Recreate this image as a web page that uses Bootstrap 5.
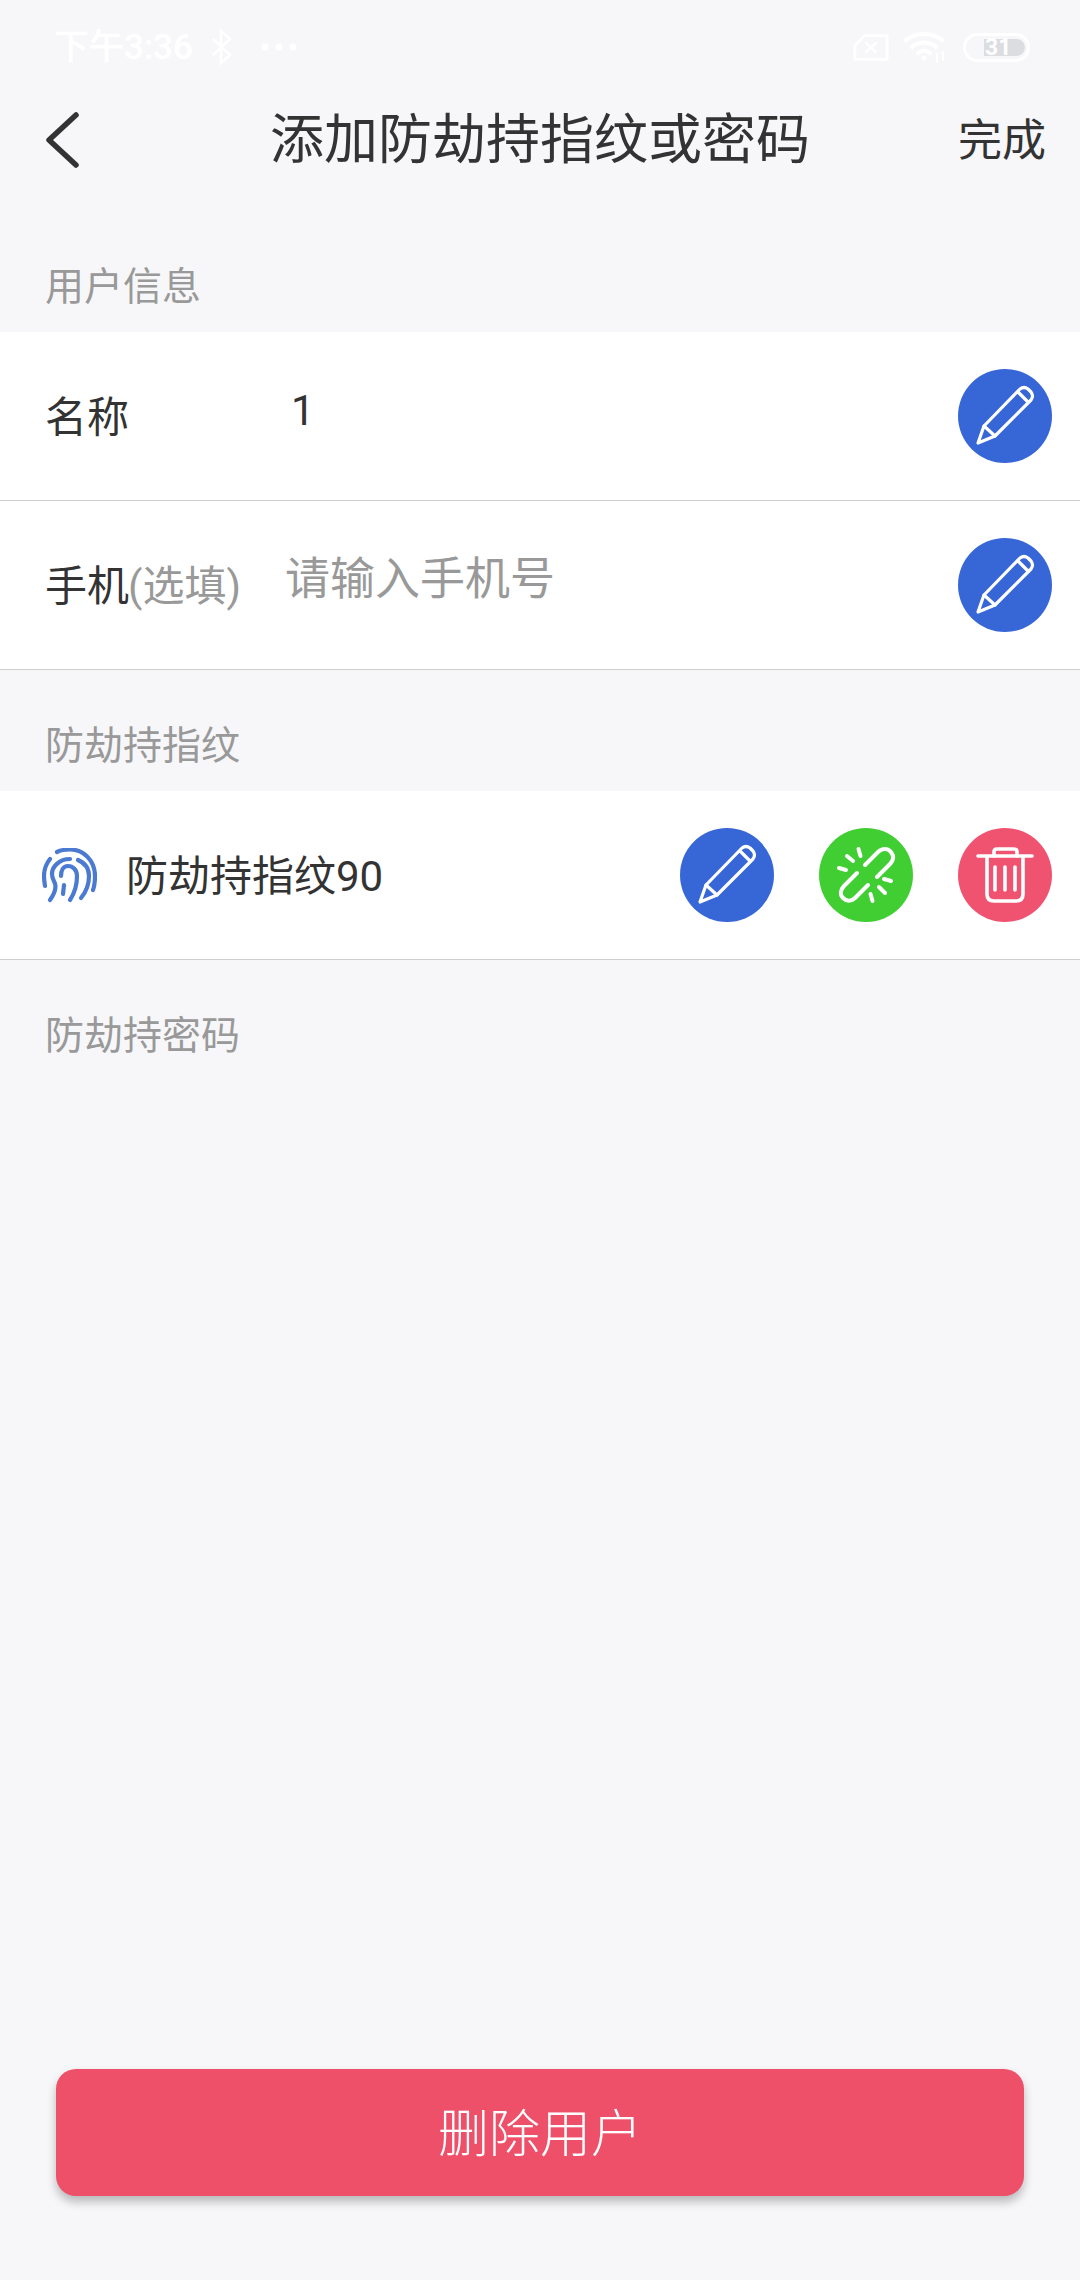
<!DOCTYPE html>
<html lang="zh-CN">
<head>
<meta charset="utf-8">
<title>添加防劫持指纹或密码</title>
<link rel="stylesheet" href="https://cdn.jsdelivr.net/npm/bootstrap@5.3.0/dist/css/bootstrap.min.css">
<style>
html, body { margin: 0; background: #f7f7fa; }
body { font-family: Roboto, "Noto Sans CJK SC", sans-serif; color: #333; font-weight: 400; }
.screen { width: 1080px; height: 2280px; }
.status-bar { height: 92px; padding: 2px 50px 0 54px; color: #fff; }
.status-time { font-size: 35px; font-weight: 500; line-height: 1; }
.bt-icon { margin-left: 18px; }
.dots-icon { margin-left: 28px; }
.wifi-icon { margin-left: 14px; }
.batt { width: 67px; height: 29px; border: 3px solid #fff; border-radius: 15px; padding-right: 2px; }
.batt-fill { width: 41px; height: 17px; background: #dcdde1; border-radius: 0 9px 9px 0; font-size: 23px; font-weight: 700; line-height: 17px; color: #fff; padding-left: 1px; }
.top-bar { height: 96px; }
.top-side { width: 125px; flex: none; white-space: nowrap; }
.top-title { font-size: 54px; line-height: 1; margin-top: 2px; }
.top-done { font-size: 44px; line-height: 1; text-align: right; padding-right: 34px; margin-top: 2px; }
.sec-label { font-size: 39px; line-height: 90px; height: 90px; padding-left: 45px; color: #999; }
.sec-first { margin-top: 54px; }
.sec-gap { margin-top: 31px; }
.info-row { height: 169px; background: #fff; border-bottom: 1px solid #cfcfcf; padding-right: 28px; }
.row-key { width: 285px; flex: none; padding-left: 45px; font-size: 42px; line-height: 1; margin-top: 4px; white-space: nowrap; }
.row-key small { font-size: 42px; color: #999; margin-left: -1px; }
.row-val { font-size: 42px; line-height: 1; margin-bottom: 10px; margin-left: 6px; }
.row-hint { font-size: 45px; line-height: 1; color: #999; margin-bottom: 12px; }
.fp-icon { margin-left: 42px; margin-right: 29px; flex: none; }
.fp-name { font-size: 42px; line-height: 1; margin-top: 3px; }
.circ { width: 94px; height: 94px; flex: none; display: block; }
.circ-gap { gap: 45px; }
.del-btn { width: 968px; height: 127px; margin: auto 0 84px 56px; padding-top: 10px; background: #ef5069; border: 0; border-radius: 20px; color: #fff; font-size: 51px; font-weight: 300; line-height: 1; box-shadow: 0 6px 10px rgba(0,0,0,.25); }
</style>
</head>
<body>
<div class="screen d-flex flex-column">
  <div class="status-bar d-flex align-items-center">
    <span class="status-time">下午3:36</span>
    <svg class="bt-icon" width="22" height="36" viewBox="0 0 22 36" fill="none" stroke="#fff" stroke-width="2.5"><path d="M2 10 L19 26 L10 34 V2 L19 10 L2 26"/></svg>
    <svg class="dots-icon" width="36" height="8" viewBox="0 0 36 8" fill="#fff"><circle cx="4" cy="4" r="3.5"/><circle cx="18" cy="4" r="3.5"/><circle cx="32" cy="4" r="3.5"/></svg>
    <svg class="ms-auto" width="36" height="29" viewBox="0 0 38 29" fill="none" stroke="#fff" stroke-width="3" stroke-linejoin="round"><path d="M2 12 L12 2 H36 V27 H2 Z"/><path d="M13 9 L25 20 M25 9 L13 20" stroke-width="2.5"/></svg>
    <svg class="wifi-icon" width="44" height="32" viewBox="0 0 44 32" fill="none" stroke="#fff" stroke-width="4" stroke-linecap="round"><path d="M3 9 C14 1 28 1 39 9"/><path d="M9 16 C16 10 26 10 33 16"/><path d="M15 22 C19 19 23 19 27 22"/><circle cx="21" cy="27" r="2.5" fill="#fff" stroke="none"/><path d="M34 23 V31 M40 21 V29" stroke-width="2"/></svg>
    <div class="batt ms-3 d-flex justify-content-end align-items-center">
      <div class="batt-fill">31</div>
    </div>
  </div>

  <div class="top-bar d-flex align-items-center">
    <div class="top-side">
      <svg class="d-block" width="120" height="60" viewBox="0 30 120 60" fill="none" stroke="#333" stroke-width="5.5" stroke-linecap="round" stroke-linejoin="round"><path d="M76 35 L49 60 L76 85"/></svg>
    </div>
    <div class="top-title flex-grow-1 text-center">添加防劫持指纹或密码</div>
    <div class="top-side top-done">完成</div>
  </div>

  <div class="sec-label sec-first">用户信息</div>
  <div class="info-row d-flex align-items-center">
    <div class="row-key">名称</div>
    <div class="row-val flex-grow-1">1</div>
    <svg class="circ" viewBox="0 0 94 94"><circle cx="47" cy="47" r="47" fill="#3766d6"/><g fill="none" stroke="#fff" stroke-width="3.2" stroke-linejoin="round" stroke-linecap="round"><path d="M20 74 L26 57 L62 20 Q66 17 70 20 L73 23 Q76 27 73 31 L37 67 Z"/><path d="M26 57 L37 67"/><path d="M60 23 L70 33"/></g></svg>
  </div>
  <div class="info-row d-flex align-items-center">
    <div class="row-key">手机<small>(选填)</small></div>
    <div class="row-hint flex-grow-1">请输入手机号</div>
    <svg class="circ" viewBox="0 0 94 94"><circle cx="47" cy="47" r="47" fill="#3766d6"/><g fill="none" stroke="#fff" stroke-width="3.2" stroke-linejoin="round" stroke-linecap="round"><path d="M20 74 L26 57 L62 20 Q66 17 70 20 L73 23 Q76 27 73 31 L37 67 Z"/><path d="M26 57 L37 67"/><path d="M60 23 L70 33"/></g></svg>
  </div>

  <div class="sec-label sec-gap">防劫持指纹</div>
  <div class="info-row d-flex align-items-center">
    <svg class="fp-icon" width="55" height="55" viewBox="0 0 55 55" fill="none" stroke="#4a7ad2" stroke-width="4.2" stroke-linecap="round">
      <path d="M15 4 C19 2 24 1.500 28 1.500 C42 1.500 53 13 53 28 C53 33 52.500 38 51 42"/>
      <path d="M8 11 C4 16 2 22 2 28 C2 32 2.500 35 3 38"/>
      <path d="M8 52 C11 48 13.500 44 13.500 38 C13.500 34 10 32 10 26 C10 19 17 11 28 11"/>
      <path d="M36 12 C43 15 47 21 47 28 C47 36 44 44 39 50"/>
      <path d="M28 52 C32 46 35 38 35 28 C35 22 31 18 26 18 C21 18 19 23 19 28"/>
      <path d="M22 37 L21 46"/>
    </svg>
    <div class="fp-name flex-grow-1">防劫持指纹90</div>
    <div class="d-flex circ-gap">
      <svg class="circ" viewBox="0 0 94 94"><circle cx="47" cy="47" r="47" fill="#3766d6"/><g fill="none" stroke="#fff" stroke-width="3.2" stroke-linejoin="round" stroke-linecap="round"><path d="M20 74 L26 57 L62 20 Q66 17 70 20 L73 23 Q76 27 73 31 L37 67 Z"/><path d="M26 57 L37 67"/><path d="M60 23 L70 33"/></g></svg>
      <svg class="circ" viewBox="0 0 94 94"><circle cx="47" cy="47" r="47" fill="#40ce33"/><g fill="none" stroke="#fff" stroke-width="4" stroke-linecap="round"><path d="M46 37 L59 24 C63 20 69 20 72 24 C75 28 75 32 71 36 L58 49"/><path d="M38 45 L25 58 C21 62 21 67 24 70 C28 74 33 73 36 70 L49 57"/><path d="M39.500 21 L41.500 28 M28 28 L34 33 M20 40 L27 42 M65 51 L72 53 M60 59 L66 65 M51.500 66 L53.500 73"/></g></svg>
      <svg class="circ" viewBox="0 0 94 94"><circle cx="47" cy="47" r="47" fill="#ef5370"/><g fill="none" stroke="#fff" stroke-width="3.6" stroke-linecap="round" stroke-linejoin="round"><path d="M20 28 H74"/><path d="M36 28 V24 Q36 21 39 21 H56 Q59 21 59 24 V28"/><path d="M29 29 V66 Q29 73 36 73 H58 Q65 73 65 66 V29"/><path d="M37 39 V62 M47 39 V62 M57 39 V62"/></g></svg>
    </div>
  </div>

  <div class="sec-label sec-gap">防劫持密码</div>

  <button type="button" class="btn del-btn d-block">删除用户</button>
</div>
<script src="https://cdn.jsdelivr.net/npm/bootstrap@5.3.0/dist/js/bootstrap.bundle.min.js"></script>
</body>
</html>
